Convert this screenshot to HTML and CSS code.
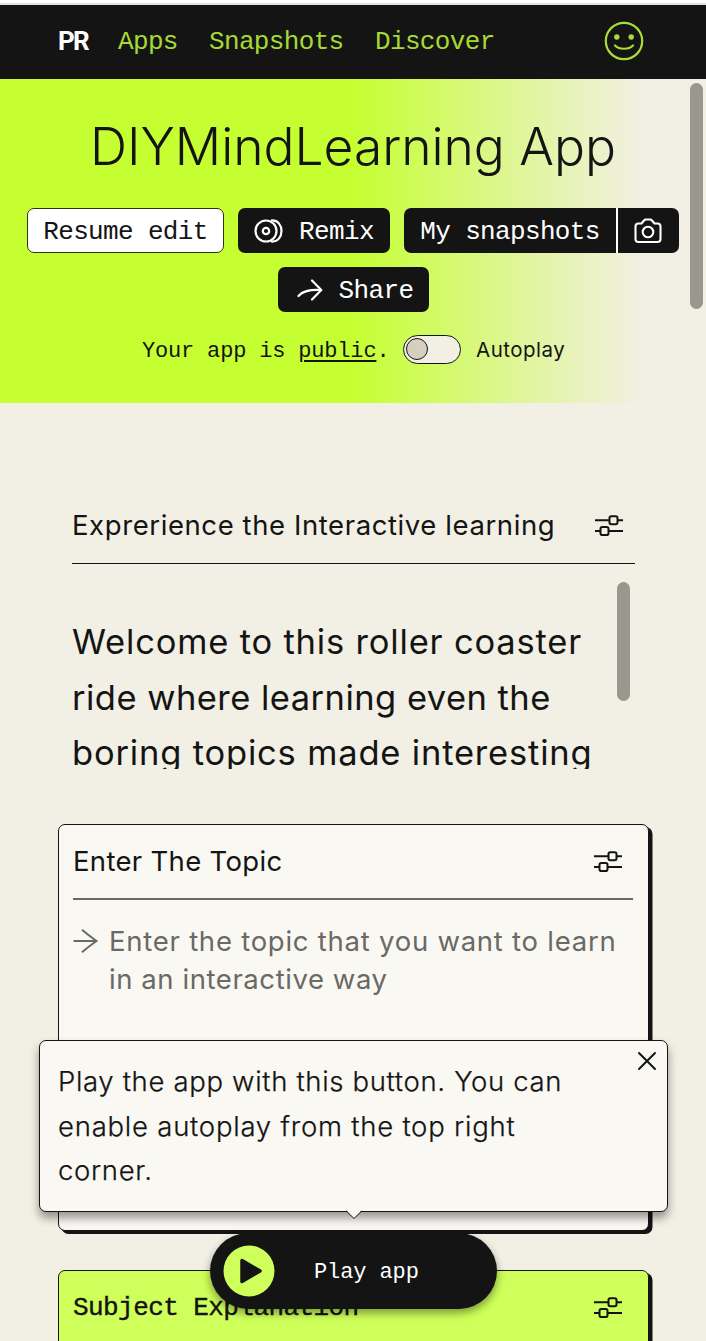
FILE: index.html
```html
<!DOCTYPE html>
<html lang="en">
<head>
<meta charset="utf-8">
<title>DIYMindLearning App</title>
<link rel="stylesheet" href="styles.css">
</head>
<body>
<svg class="defs" aria-hidden="true">
  <symbol id="sliders" viewBox="0 0 28 21">
    <g fill="none" stroke="currentColor" stroke-width="2">
      <path d="M0 5.2H14M22.500 5.200H28M0 16H5M13.500 16H28"/>
      <rect x="14.500" y="1.300" width="8" height="8" rx="1.800"/>
      <rect x="5.500" y="12" width="8" height="8" rx="1.800"/>
    </g>
  </symbol>
</svg>
<div class="screen">
  <header class="nav">
    <span class="logo">PR</span>
    <a class="link link-apps">Apps</a>
    <a class="link link-snapshots">Snapshots</a>
    <a class="link">Discover</a>
    <svg class="smile" viewBox="0 0 40 40" fill="none" stroke="#a9de35" stroke-width="2.200">
      <circle cx="20" cy="20" r="18.200"/>
      <path d="M11 24.500C15 28.800 25 28.800 29 24.500" stroke-linecap="round"/>
      <circle cx="12.800" cy="16" r="2.700" fill="#a9de35" stroke="none"/>
      <circle cx="27.200" cy="16" r="2.700" fill="#a9de35" stroke="none"/>
    </svg>
  </header>

  <section class="hero">
    <h1 class="title">DIYMindLearning App</h1>
    <div class="actions">
      <button class="btn btn-light">Resume edit</button>
      <button class="btn btn-remix">
        <svg width="30" height="24" viewBox="0 0 30 24" fill="none" stroke="currentColor" stroke-width="2.200">
          <circle cx="12" cy="12" r="10.500"/><circle cx="12" cy="12" r="3.200"/>
          <path d="M17 1.500C31 0 31 24 17 22.500"/>
        </svg>
        Remix
      </button>
      <div class="group">
        <button class="btn btn-snap">My snapshots</button>
        <button class="btn btn-camera" aria-label="Take snapshot">
          <svg width="28" height="26" viewBox="0 0 28 26" fill="none" stroke="currentColor" stroke-width="2.100" stroke-linejoin="round">
            <path d="M4.500 5.500H7.500L10 2.500Q10.700 1.500 12 1.500H16Q17.300 1.500 18 2.500L20.500 5.500H23.500Q26.500 5.500 26.500 8.500V21Q26.500 24 23.500 24H4.500Q1.500 24 1.500 21V8.500Q1.500 5.500 4.500 5.500Z"/>
            <circle cx="14" cy="14" r="5.300"/>
          </svg>
        </button>
      </div>
      <button class="btn btn-share">
        <svg width="26" height="24" viewBox="0 0 26 24" fill="none" stroke="currentColor" stroke-width="2.200" stroke-linecap="round" stroke-linejoin="round">
          <path d="M1.500 18C6 12.500 13 11.500 24 12M15 2.500L24.300 12L15 21.500"/>
        </svg>
        Share
      </button>
    </div>
    <div class="status">
      <span class="visibility">Your app is <u>public</u>.</span>
      <span class="toggle"><span class="knob"></span></span>
      <span class="autoplay">Autoplay</span>
    </div>
    <span class="thumb page-thumb"></span>
  </section>

  <main class="content">
    <section class="intro">
      <div class="head">
        <h2 class="head-text intro-head">Exprerience the Interactive learning</h2>
        <svg class="sliders"><use href="#sliders"/></svg>
      </div>
      <div class="welcome">
        <p class="welcome-text">Welcome to this roller coaster<br><span class="welcome-second">ride where learning even the</span><br>boring topics made interesting</p>
        <span class="thumb text-thumb"></span>
      </div>
    </section>

    <section class="card topic">
      <div class="head">
        <h2 class="head-text topic-head">Enter The Topic</h2>
        <svg class="sliders"><use href="#sliders"/></svg>
      </div>
      <div class="prompt">
        <svg class="arrow" width="25" height="24" viewBox="0 0 25 24" fill="none" stroke="currentColor" stroke-width="2">
          <path d="M.5 12H23M9 .8Q15 6 23.500 12Q15 18 9 23.200"/>
        </svg>
        <p class="prompt-text">Enter the topic that you want to learn<br><span class="prompt-second">in an interactive way</span></p>
      </div>
    </section>

    <section class="card subject">
      <div class="head">
        <h2 class="subject-head">Subject Explanation</h2>
        <svg class="sliders"><use href="#sliders"/></svg>
      </div>
    </section>
  </main>

  <aside class="tip">
    <p class="tip-text">Play the app with this button. You can<br><span class="tip-second">enable autoplay from the top right</span><br>corner.</p>
    <svg class="close" width="20" height="20" viewBox="0 0 20 20" stroke="currentColor" stroke-width="2" stroke-linecap="round"><path d="M2 2L18 18M18 2L2 18"/></svg>
    <svg class="caret" width="18" height="10" viewBox="0 0 18 10"><path d="M0 0H18V1L16 1L9 8.500L2 1H0Z" fill="#faf8f3"/><path d="M1 .8L9 8.500L17 .8" fill="none" stroke="#141414"/></svg>
  </aside>

  <button class="play">
    <svg class="play-icon" width="52" height="52" viewBox="0 0 52 52">
      <circle cx="26" cy="26" r="25.500" fill="#ceff5a"/>
      <path d="M19 15.500L37 26L19 36.500Z" fill="#141414" stroke="#141414" stroke-width="3.500" stroke-linejoin="round"/>
    </svg>
    <span class="play-label">Play app</span>
  </button>
</div>
</body>
</html>
```
FILE: styles.css
```css
* { box-sizing: border-box; }
html, body { margin: 0; height: 1341px; overflow: hidden; }
body { background: #f2efe4; color: #141414; font-family: Inter, sans-serif; }
h1, h2, p { margin: 0; font-weight: 400; white-space: nowrap; }
button { border: 0; color: inherit; font: inherit; }
.defs { position: absolute; width: 0; height: 0; }
.screen { position: relative; width: 706px; height: 1341px; overflow: hidden; border-top: 3px solid #fff; }

.nav {
  display: flex; align-items: center; height: 76px; padding: 0 62px 0 58px;
  border-top: 2px solid #e2e2e2; background: #141414;
}
.logo { width: 60px; margin-top: -3px; color: #fff; font: 700 26px/30px Roboto, sans-serif; letter-spacing: -1.800px; }
.link { color: #a6da33; font: 26px/30px "Liberation Mono", monospace; letter-spacing: -.65px; }
.link-apps { width: 91px; }
.link-snapshots { width: 166px; }
.smile { width: 40px; height: 40px; margin-left: auto; margin-top: -2px; }

.hero {
  position: relative; height: 324px; padding-top: 33px;
  background: linear-gradient(90deg, #c5ff32 50%, #f2efe4 91%);
}
.title { text-align: center; font-size: 51.500px; line-height: 68px; font-weight: 300; }
.actions { display: flex; flex-wrap: wrap; justify-content: center; gap: 14px; padding: 28px 0 0; }
.btn {
  display: flex; align-items: center; justify-content: center; height: 45px; padding: 3px 0 0;
  border-radius: 7px; background: #141414; color: #fff;
  font: 26px/42px "Liberation Mono", monospace; letter-spacing: -.65px; white-space: nowrap;
}
.btn-light { width: 197px; border: 1.500px solid #2b3510; background: #fff; color: #141414; }
.btn-remix { width: 152px; gap: 15px; }
.group { display: flex; gap: 2px; background: #fff; border-radius: 7px; }
.btn-snap { width: 212px; border-radius: 7px 0 0 7px; }
.btn-camera { width: 61px; border-radius: 0 7px 7px 0; padding-right: 2px; }
.btn svg { margin-top: -3px; }
.btn-share { width: 151px; gap: 16px; padding-left: 4px; }
.status { display: flex; align-items: center; height: 30px; margin-top: 22px; padding-left: 142px; }
.visibility { width: 261px; padding-top: 5px; font: 22px/30px "Liberation Mono", monospace; letter-spacing: -.18px; white-space: nowrap; }
.visibility u { text-decoration-thickness: 2px; text-underline-offset: 3px; }
.toggle { display: flex; align-items: center; width: 58px; height: 29px; padding-left: 2px; border: 1.500px solid #141414; border-radius: 15px; background: #f2efe4; }
.knob { width: 22px; height: 22px; border: 1.500px solid #141414; border-radius: 50%; background: #d6cfc0; }
.autoplay { margin: 1px 0 0 15px; font-size: 20.500px; line-height: 30px; letter-spacing: .5px; }
.thumb { position: absolute; width: 13px; border-radius: 7px; background: #98988f; }
.page-thumb { left: 690px; top: 4px; height: 226px; }

.content { padding: 85px 57px 0 58px; }
.head { display: flex; align-items: center; justify-content: space-between; border-bottom: 1px solid #141414; }
.head-text { margin-top: -2px; font-size: 27.500px; line-height: 36px; }
.intro-head { letter-spacing: .59px; }
.topic-head { letter-spacing: .32px; }
.sliders { flex: none; width: 28px; height: 21px; }
.intro { padding: 0 14px; }
.intro .head { height: 76px; padding-right: 12px; }
.welcome { position: relative; height: 205px; padding-top: 50px; overflow: hidden; }
.welcome-text { font-size: 34.500px; line-height: 55.500px; letter-spacing: .82px; }
.welcome-second { letter-spacing: .47px; }
.text-thumb { left: 545px; top: 18px; height: 119px; }
.card { width: 591px; border: 1.500px solid #141414; border-radius: 7px; box-shadow: 3.500px 3px 0 #141414; padding: 0 15px 0 14px; }
.topic { height: 407px; margin-top: 55px; background: #faf8f3; }
.card .head { height: 75px; padding-right: 11px; border-bottom: 2px solid #6b6966; }
.prompt { display: flex; gap: 11px; padding-top: 22px; color: #696965; }
.arrow { flex: none; margin-top: 7px; }
.prompt-text { font-size: 27.500px; line-height: 38px; letter-spacing: .75px; }
.prompt-second { letter-spacing: .57px; }
.subject { height: 120px; margin-top: 39px; background: #ceff5a; }
.subject .head { border-color: transparent; }
.subject-head { font: 400 26px/36px "Liberation Mono", monospace; letter-spacing: -.57px; -webkit-text-stroke: .4px #141414; }

.tip {
  position: absolute; left: 39px; top: 1037px; width: 629px; height: 172px; padding: 18px;
  border: 1.500px solid #141414; border-radius: 7px; background: #faf8f3; box-shadow: 0 6px 10px rgba(0,0,0,.4);
}
.tip-text { font-size: 27.500px; line-height: 44.700px; font-weight: 300; letter-spacing: .67px; -webkit-text-stroke: .25px #141414; }
.tip-second { letter-spacing: .77px; }
.close { position: absolute; right: 10px; top: 10px; }
.caret { position: absolute; left: 305px; bottom: -9px; }
.play {
  position: absolute; left: 210px; top: 1230px; width: 287px; height: 76px; padding: 0 0 0 13px;
  display: flex; align-items: center; border-radius: 38px; background: #141414; color: #fff;
  box-shadow: 0 4px 8px rgba(0,0,0,.4);
}
.play-label { margin: 3px 0 0 39px; font: 22px/30px "Liberation Mono", monospace; letter-spacing: -.1px; }
```
